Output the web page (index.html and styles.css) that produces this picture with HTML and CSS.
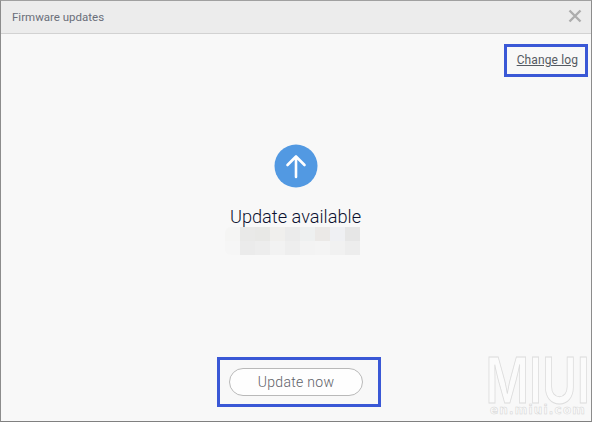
FILE: index.html
```html
<!DOCTYPE html>
<html lang="en">
<head>
<meta charset="utf-8">
<title>Firmware updates</title>
<link rel="stylesheet" href="styles.css">
</head>
<body>
<div class="window">
  <header class="titlebar">
    <span class="title">Firmware updates</span>
    <svg class="close" width="14" height="14" viewBox="0 0 14 14" aria-label="Close"><path d="M1.5 1.5 12.5 12.5M12.5 1.5 1.5 12.5" stroke="#adadad" stroke-width="2.4" fill="none"/></svg>
  </header>
  <main class="content">
    <div class="toolbar">
      <a class="changelog">Change log</a>
    </div>
    <div class="status">
      <svg class="up-icon" width="44" height="44" viewBox="0 0 44 44"><circle cx="22" cy="22" r="21.5" fill="#5299e2"/><path d="M22 33V12.500M13.500 21 22 12.500 30.500 21" stroke="#fff" stroke-width="2.6" fill="none" stroke-linecap="round" stroke-linejoin="round"/></svg>
      <div class="status-text">Update available</div>
      <div class="blur">
        <i></i><i></i><i></i><i></i><i></i><i></i><i></i><i></i><i></i>
        <i></i><i></i><i></i><i></i><i></i><i></i><i></i><i></i><i></i>
      </div>
    </div>
    <div class="actions">
      <button class="update-btn">Update now</button>
    </div>
    <div class="highlight highlight-log"></div>
    <div class="highlight highlight-btn"></div>
    <div class="watermark">
      <div class="wm-big">MIUI</div>
      <div class="wm-small">en.miui.com</div>
    </div>
  </main>
</div>
</body>
</html>
```
FILE: styles.css
```css
* { box-sizing: border-box; }
html, body { margin: 0; height: 100%; }
body { font-family: "Open Sans", "Noto Sans", sans-serif; overflow: hidden; }
.window {
  width: 592px; height: 422px;
  border: 1px solid #8c8c8c; border-top-color: #a0a0a0; border-bottom-color: #808080;
  background: #f8f8f8;
  display: flex; flex-direction: column;
}
.titlebar {
  height: 33px; flex: none;
  background: #ececec;
  border-bottom: 1px solid #d2d2d2;
  display: flex; align-items: center; justify-content: space-between;
  padding: 0 9px 0 11px;
}
.title { font: 11.5px Roboto, "Open Sans", sans-serif; color: #6a6f7a; }
.close { display: block; margin-top: -2px; }
.content { position: relative; flex: 1; display: flex; flex-direction: column; align-items: center; }
.toolbar { align-self: stretch; display: flex; justify-content: flex-end; padding: 18px 13px 0 0; height: 110px; }
.changelog { font: 12px/16px Roboto, "Open Sans", sans-serif; letter-spacing: 0.12px; color: #555a62; text-decoration: underline; }
.status { display: flex; flex-direction: column; align-items: center; margin-right: 1px; }
.up-icon { display: block; }
.status-text { font: 300 18.2px/20px Roboto, "Open Sans", sans-serif; color: #0c1130; margin-top: 19px; }
.blur { display: grid; grid-template-columns: repeat(9, 15px); grid-auto-rows: 14px; margin-right: 6px; border-radius: 6px 0 0 6px; overflow: hidden; }
.blur i { display: block; background: #f1f1f1; }
.blur i:nth-child(1) { background: #f5f5f4; }
.blur i:nth-child(2) { background: #e9e9e8; }
.blur i:nth-child(3) { background: #e8e8e6; }
.blur i:nth-child(4) { background: #f0efed; }
.blur i:nth-child(5) { background: #ebebeb; }
.blur i:nth-child(6) { background: #eef0f0; }
.blur i:nth-child(7) { background: #ebe9e7; }
.blur i:nth-child(8) { background: #eff0f3; }
.blur i:nth-child(9) { background: #e6e6e6; }
.blur i:nth-child(10) { background: #f6f6f6; }
.blur i:nth-child(11) { background: #ebebeb; }
.blur i:nth-child(12) { background: #ededed; }
.blur i:nth-child(13) { background: #f2f2f2; }
.blur i:nth-child(14) { background: #eeeeee; }
.blur i:nth-child(15) { background: #f3f3f3; }
.blur i:nth-child(16) { background: #f4f4f4; }
.blur i:nth-child(17) { background: #f1f1f1; }
.blur i:nth-child(18) { background: #ededed; }
.actions { margin-top: auto; padding-bottom: 25px; }
.update-btn {
  display: block;
  width: 134px; height: 28px;
  border: 1px solid #b9b9b9; border-radius: 14px;
  background: #fefefe;
  font: 300 14px Roboto, "Open Sans", sans-serif;
  letter-spacing: 0.3px;
  color: #5f6269; padding: 0;
}
.highlight { position: absolute; border: 3px solid #3a58d6; }
.highlight-log { left: 503px; top: 10px; width: 84px; height: 33px; }
.highlight-btn { left: 216px; top: 323px; width: 164px; height: 50px; }
.watermark { position: absolute; right: 2px; bottom: 5px; width: 102px; display: flex; flex-direction: column; align-items: center; pointer-events: none; }
.wm-big {
  font: 600 63px/47px Inter, "Liberation Sans", sans-serif;
  white-space: nowrap;
  color: #fbfbfb; -webkit-text-stroke: 1px #dcdcdc;
  transform: scaleX(0.75);
}
.wm-small {
  font: 700 12px/12px "DejaVu Sans", sans-serif;
  letter-spacing: 1.2px;
  white-space: nowrap;
  color: #fbfbfb; -webkit-text-stroke: 0.5px #d4d4d4;
}
```
